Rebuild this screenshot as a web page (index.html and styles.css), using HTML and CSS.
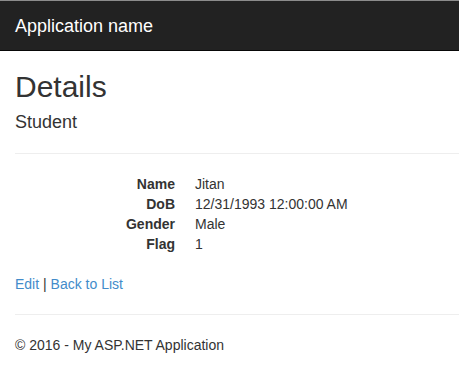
FILE: index.html
```html
<!DOCTYPE html>
<html>
<head>
<meta charset="utf-8">
<title>Details</title>
<link rel="stylesheet" href="styles.css">
</head>
<body>
<div class="navbar">
  <a class="brand" href="#">Application name</a>
</div>
<div class="body-content">
  <h2 class="title">Details</h2>
  <div>
    <h4 class="subtitle">Student</h4>
    <hr class="rule">
    <dl class="details">
      <dt>Name</dt><dd>Jitan</dd>
      <dt>DoB</dt><dd>12/31/1993 12:00:00 AM</dd>
      <dt>Gender</dt><dd>Male</dd>
      <dt>Flag</dt><dd>1</dd>
    </dl>
  </div>
  <p class="actions"><a href="#">Edit</a> | <a href="#">Back to List</a></p>
  <hr class="rule">
  <footer class="footer">
    <p>&copy; 2016 - My ASP.NET Application</p>
  </footer>
</div>
</body>
</html>
```
FILE: styles.css
```css
html, body {
  margin: 0;
  padding: 0;
}
body {
  font-family: "Liberation Sans", Arial, sans-serif;
  font-size: 14px;
  line-height: 20px;
  color: #333;
  background: #fff;
  overflow: hidden;
}
.navbar {
  box-sizing: border-box;
  height: 51px;
  background: #222;
  border-top: 1px solid #8c8c8c;
  border-bottom: 1px solid #080808;
  display: flex;
  align-items: center;
  padding-left: 15px;
}
.brand {
  color: #fff;
  font-size: 18px;
  line-height: 20px;
  text-decoration: none;
}
.body-content {
  padding-left: 15px;
  margin-right: -1px;
}
.title {
  font-size: 30px;
  font-weight: 500;
  line-height: 33px;
  margin: 19px 0 10px;
}
.subtitle {
  font-size: 18px;
  font-weight: 500;
  line-height: 19.8px;
  margin: 10px 0 10px;
}
.rule {
  border: 0;
  border-top: 1px solid #eee;
  margin: 20px 0;
  height: 0;
}
.details {
  margin: 0 0 20px;
  display: grid;
  grid-template-columns: 160px 1fr;
  column-gap: 20px;
}
.details dt {
  font-weight: bold;
  text-align: right;
}
.details dd {
  margin: 0;
}
.actions {
  margin: 0 0 10px;
}
.actions a {
  color: #428bca;
  text-decoration: none;
}
.footer p {
  margin: 0 0 10px;
}
```
